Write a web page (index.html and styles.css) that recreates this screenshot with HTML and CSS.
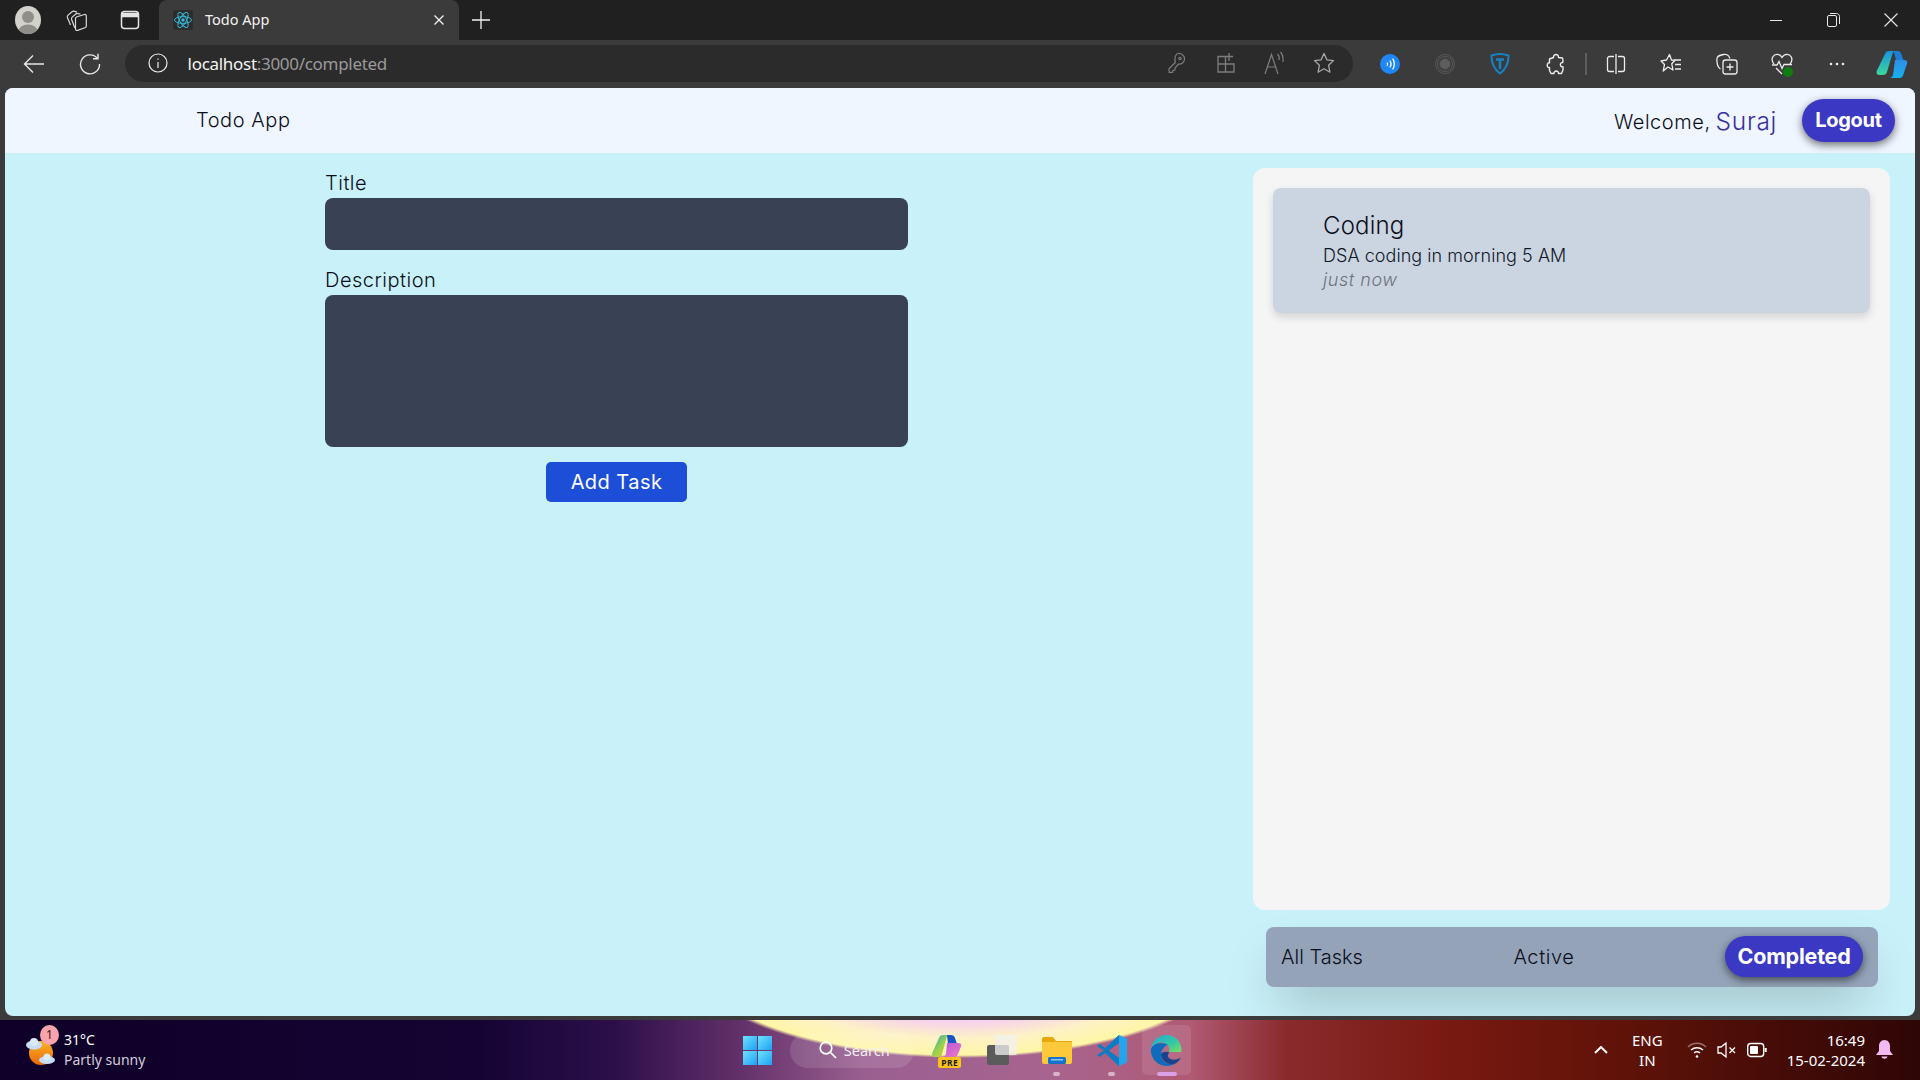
FILE: index.html
```html
<!DOCTYPE html>
<html lang="en">
<head>
<meta charset="utf-8">
<title>Todo App</title>
<link rel="stylesheet" href="styles.css">
</head>
<body>
<div class="browser">
  <div class="tabstrip">
    <div class="strip-btn avatar-btn">
      <svg width="26" height="28" viewBox="0 0 26 28"><defs><clipPath id="av"><ellipse cx="13" cy="14" rx="13" ry="14"/></clipPath></defs><ellipse cx="13" cy="14" rx="13" ry="14" fill="#d2d1cc"/><g clip-path="url(#av)"><circle cx="13" cy="11" r="6" fill="#8f8e89"/><ellipse cx="13" cy="26" rx="10" ry="7.500" fill="#8f8e89"/></g></svg>
    </div>
    <div class="strip-btn coll-btn">
      <svg width="22" height="22" viewBox="0 0 22 22" fill="none" stroke="#d8d8d8" stroke-width="1.200"><path d="M4.500 16 1.400 8.500c-.4-1 0-1.800.7-2.400L6 2.800c.8-.7 1.800-.7 2.800-.4l2.200.7"/><path d="M8.800 19 5.600 10.500c-.4-1-.1-1.800.6-2.400L9.800 5c.8-.7 1.800-.8 2.700-.4l2 .7"/><path d="M9.500 9.500c0-1 .7-1.500 1.500-1.800l7.500-2.200c1-.3 1.800.4 1.800 1.400v10c0 1-.5 1.600-1.400 1.900l-7.300 2.600c-1 .3-2.100-.3-2.100-1.400z"/></svg>
    </div>
    <div class="strip-btn vert-btn">
      <svg width="20" height="20" viewBox="0 0 20 20" fill="none" stroke="#e4e4e4" stroke-width="1.500"><rect x="1.500" y="1.500" width="17" height="17" rx="3"/><path d="M2 5h16" stroke-width="4.500"/></svg>
    </div>
    <div class="tab">
      <span class="favicon">
        <svg width="20" height="20" viewBox="0 0 20 20" fill="none" stroke="#38b6d8" stroke-width="1"><ellipse cx="10" cy="10" rx="8.500" ry="3.400"/><ellipse cx="10" cy="10" rx="8.500" ry="3.400" transform="rotate(60 10 10)"/><ellipse cx="10" cy="10" rx="8.500" ry="3.400" transform="rotate(120 10 10)"/><circle cx="10" cy="10" r="1.700" fill="#38b6d8" stroke="none"/></svg>
      </span>
      <span class="tab-title">Todo App</span>
      <svg class="tab-close" width="12" height="12" viewBox="0 0 12 12" stroke="#f2f2f2" stroke-width="1.300"><path d="M1.500 1.500l9 9M10.500 1.500l-9 9"/></svg>
    </div>
    <div class="strip-btn new-tab">
      <svg width="18" height="18" viewBox="0 0 18 18" stroke="#f2f2f2" stroke-width="1.300"><path d="M9 0v18M0 9h18"/></svg>
    </div>
    <div class="win-controls">
      <span class="win-btn"><svg width="12" height="12" viewBox="0 0 12 12" stroke="#e8e8e8"><path d="M0 6.500h12"/></svg></span>
      <span class="win-btn"><svg width="13" height="14" viewBox="0 0 13 14" fill="none" stroke="#e8e8e8"><rect x=".5" y="2.500" width="9" height="11" rx="1.500"/><path d="M3 .5h6.500c1.500 0 3 1 3 3V11"/></svg></span>
      <span class="win-btn"><svg width="14" height="14" viewBox="0 0 14 14" stroke="#e8e8e8" stroke-width="1.100"><path d="M.5.500l13 13M13.500.5l-13 13"/></svg></span>
    </div>
  </div>

  <div class="toolbar">
    <div class="nav-btn"><svg width="22" height="20" viewBox="0 0 22 20" fill="none" stroke="#e8e8e8" stroke-width="1.400"><path d="M21 10H1.500M10 1.500 1.500 10l8.500 8.500"/></svg></div>
    <div class="nav-btn"><svg width="22" height="22" viewBox="0 0 22 22" fill="none" stroke="#e8e8e8" stroke-width="1.400"><path d="M18.500 5.500A9.500 9.500 0 1 0 20.500 11"/><path d="M19 .8v5h-5"/></svg></div>
    <div class="addressbar">
      <svg class="addr-info" width="20" height="20" viewBox="0 0 20 20" fill="none" stroke="#ececec" stroke-width="1.200"><circle cx="10" cy="10" r="9"/><path d="M10 9v6M10 5.400v1.400"/></svg>
      <span class="url"><span class="url-host">localhost</span>:3000/completed</span>
      <span class="addr-btn"><svg width="20" height="22" viewBox="0 0 20 22" fill="none" stroke="#7d7d7d" stroke-width="1.200"><path d="M11 1.500c3.500-.5 7 2.500 6.500 6-.4 2.800-3 4.800-5.800 4.500L8 16v2l-2 .3-.5 2H2.200l-.2-3.500 6.300-6.300c-1.200-4 .2-8.500 2.700-9z"/><circle cx="13" cy="6.500" r="1.200"/></svg></span>
      <span class="addr-btn"><svg width="20" height="22" viewBox="0 0 20 22" fill="none" stroke="#7d7d7d" stroke-width="1.300"><path d="M2 4.500h7.500V20H2zM2 12h16v8H9.500M13 1v8M9.500 4.500H17"/></svg></span>
      <span class="addr-btn"><svg width="22" height="24" viewBox="0 0 22 24" fill="none" stroke="#7d7d7d" stroke-width="1.200"><path d="M1 23 7.500 3.500 14 23M3.500 16h8M13.500 3c1.500 1.500 2 3.500 1.500 6M16.500 1c2.500 2.500 3 6 2.300 10"/></svg></span>
      <span class="addr-btn"><svg width="22" height="22" viewBox="0 0 22 22" fill="none" stroke="#a8a8a8" stroke-width="1.300" stroke-linejoin="round"><path d="M11 1.500l2.900 6.300 6.600.8-4.900 4.700 1.300 6.900L11 16.800l-5.900 3.400 1.300-6.900L1.500 8.600l6.600-.8z"/></svg></span>
    </div>
    <div class="tool-btn"><svg width="20" height="20" viewBox="0 0 20 20"><circle cx="10" cy="10" r="10" fill="#1f87f5"/><path d="M7 8.500c.8 1 .8 2.300 0 3.300M9.800 6.600c1.500 2 1.500 4.800 0 6.800M12.600 4.700c2.300 3 2.300 7.600 0 10.600" fill="none" stroke="#fff" stroke-width="1.300"/></svg></div>
    <div class="tool-btn"><svg width="20" height="20" viewBox="0 0 20 20" fill="none" stroke="#5a5a5a"><circle cx="10" cy="10" r="9.500"/><circle cx="10" cy="10" r="7.500"/><circle cx="10" cy="10" r="5" fill="#5e5e5e"/></svg></div>
    <div class="tool-btn"><svg width="20" height="22" viewBox="0 0 20 22" fill="none" stroke="#1583c5" stroke-width="2"><path d="M1.500 2.500c5-1.700 12-1.700 17 0 .2 7-2.500 13.500-8.500 18-6-4.500-8.700-11-8.500-18z"/><path d="M6 6.500h8M10 6.500V16" stroke-width="2.500"/></svg></div>
    <div class="tool-btn"><svg width="20" height="22" viewBox="0 0 20 22" fill="none" stroke="#ececec" stroke-width="1.400" stroke-linejoin="round"><path d="M7.500 4.500C7 .5 13 .5 12.500 4.500l4 .5c.6 1 .5 3 .3 4.500-3.500-.3-3 5 .2 4.300v3.200l-1.500 3.500h-3c.5-3.300-5-3.300-4.500 0H5l-1.500-3v-3C.5 15.500.5 9 3.500 9.800V6z"/></svg></div>
    <span class="tool-sep"></span>
    <div class="tool-btn"><svg width="20" height="20" viewBox="0 0 20 20" fill="none" stroke="#ececec" stroke-width="1.300"><path d="M8 2.500H3.500a2 2 0 0 0-2 2v11a2 2 0 0 0 2 2H8M12 2.500h4.500a2 2 0 0 1 2 2v11a2 2 0 0 1-2 2H12M10 0v20"/></svg></div>
    <div class="tool-btn"><svg width="22" height="22" viewBox="0 0 22 22" fill="none" stroke="#ececec" stroke-width="1.300" stroke-linejoin="round"><path d="M9.500 1.500l2 5.500 3.500.3-3.200 3.500 1.200 6.200-5-3-4.800 4 1.300-6.500L1 8l5.500-1z"/><path d="M14 7h7M15 11.500h6M15 16h6"/></svg></div>
    <div class="tool-btn"><svg width="22" height="24" viewBox="0 0 22 24" fill="none" stroke="#ececec" stroke-width="1.300"><path d="M4.500 17C2 15.500 1.300 13 1 10c-.2-2-.2-4 .5-5 1-1.200 3-2 6-2.500 2-.3 4 0 5 1.300L14 6.500"/><rect x="7" y="8" width="14" height="14" rx="2.500"/><path d="M14 11.500v7M10.500 15h7"/></svg></div>
    <div class="tool-btn pulse">
      <svg width="22" height="22" viewBox="0 0 22 22" fill="none" stroke="#ececec" stroke-width="1.300"><path d="M3 11C1 8.500.7 6 1.700 4c2-3.500 7-3.500 9.300.5 2.300-4 7.300-4 9.300-.5 1 2 .7 4.500-1.300 7"/><path d="M1 12h5l2-3.500 3 7 2-4h8M5 15l6 6"/></svg>
      <span class="pulse-dot"></span>
    </div>
    <div class="tool-btn"><svg width="16" height="4" viewBox="0 0 16 4" fill="#ececec"><circle cx="2" cy="2" r="1.300"/><circle cx="8" cy="2" r="1.300"/><circle cx="14" cy="2" r="1.300"/></svg></div>
    <div class="tool-btn"><svg width="32" height="27" viewBox="0 0 32 27"><defs><linearGradient id="cpa" x1="0" y1="0" x2="0" y2="1"><stop offset="0" stop-color="#1a93e0"/><stop offset="1" stop-color="#3bd79c"/></linearGradient><linearGradient id="cpb" x1="0" y1="0" x2="0" y2="1"><stop offset="0" stop-color="#2d8fe6"/><stop offset="1" stop-color="#17b0f0"/></linearGradient></defs><path d="M9 3c.8-2 2-3 4-3h7c-2 0-3 1-3.600 3L11 21c-.6 2-2 3-4 3H3.500C1 24 0 22 .7 20z" fill="url(#cpa)"/><path d="M17.500 0h4c2 0 3.200 1 3.800 3L30 16h-8z" fill="#1b7fd8"/><path d="M19 9h9c2 0 3.800 1 3.200 3l-4 12c-.6 2-2 3-4 3H13c2 0 3.300-1 4-3z" fill="url(#cpb)"/></svg></div>
  </div>

  <div class="page">
    <header class="app-header">
      <span class="brand">Todo App</span>
      <div class="user-area">
        <span class="welcome">Welcome,</span>
        <span class="username">Suraj</span>
        <button class="pill-btn logout">Logout</button>
      </div>
    </header>
    <main class="app-main">
      <form class="task-form">
        <label class="field-label">Title</label>
        <div class="text-input"></div>
        <label class="field-label desc-label">Description</label>
        <div class="text-area"></div>
        <button class="add-btn" type="button">Add Task</button>
      </form>
      <section class="task-side">
        <div class="task-panel">
          <article class="task-card">
            <h3 class="task-title">Coding</h3>
            <p class="task-desc">DSA coding in morning 5 AM</p>
            <p class="task-time">just now</p>
          </article>
        </div>
        <nav class="filter-bar">
          <span class="filter">All Tasks</span>
          <span class="filter filter-active">Active</span>
          <button class="pill-btn completed">Completed</button>
        </nav>
      </section>
    </main>
  </div>

  <footer class="taskbar">
    <div class="tb-left">
      <div class="weather-icon">
        <svg width="30" height="36" viewBox="0 0 30 36"><defs><linearGradient id="sun" x1="0" y1="0" x2="0" y2="1"><stop offset="0" stop-color="#fcb422"/><stop offset="1" stop-color="#e8660e"/></linearGradient></defs><circle cx="16" cy="21" r="12" fill="url(#sun)"/><ellipse cx="9" cy="13" rx="8" ry="4.500" fill="#c6dcf7"/><circle cx="9" cy="10" r="4" fill="#dcebfb"/><ellipse cx="22" cy="28" rx="8" ry="4" fill="#c6dcf7"/><circle cx="22" cy="25" r="3.500" fill="#dcebfb"/></svg>
        <span class="weather-badge">1</span>
      </div>
      <div class="weather-text">
        <span class="temp">31°C</span>
        <span class="cond">Partly sunny</span>
      </div>
    </div>
    <div class="tb-center">
      <div class="win-logo"><i></i><i></i><i></i><i></i></div>
      <div class="tb-search">
        <svg width="18" height="18" viewBox="0 0 18 18" fill="none" stroke="#fff" stroke-width="1.700"><circle cx="7" cy="7" r="5.800"/><path d="M11.500 11.500l5.500 5.500"/></svg>
        <span>Search</span>
      </div>
      <div class="tb-app copilot-app">
        <svg width="30" height="24" viewBox="0 0 30 24"><defs><linearGradient id="cg" x1="0" y1="0" x2="1" y2="1"><stop offset="0" stop-color="#19a0e0"/><stop offset=".5" stop-color="#9ad34a"/><stop offset="1" stop-color="#f0c030"/></linearGradient><linearGradient id="cp" x1="0" y1="0" x2="1" y2="1"><stop offset="0" stop-color="#b555e0"/><stop offset="1" stop-color="#f07ac0"/></linearGradient></defs><path d="M7 3c.6-2 2-3 4-3h7c-2 0-3 1-3.500 3L10 19c-.6 2-2 3-4 3H2.500C.5 22-.4 20 .2 18z" fill="url(#cg)"/><path d="M15 0h4c2 0 3.500 1 4 3l2 6h-9z" fill="#1a55c8"/><path d="M15 8h11c2 0 3.800 1 3.200 3L26 19c-.6 2-2 3-4 3H10c2 0 3.200-1 4-3z" fill="url(#cp)"/></svg>
        <span class="pre-badge">PRE</span>
      </div>
      <div class="tb-app">
        <div class="gray-stack"><span class="gs-back"></span><span class="gs-front"></span></div>
      </div>
      <div class="tb-app">
        <svg width="30" height="27" viewBox="0 0 30 27"><path d="M0 2a2 2 0 0 1 2-2h9l3 4h16v6H0z" fill="#e8a90f"/><path d="M0 5h30v20a2 2 0 0 1-2 2H2a2 2 0 0 1-2-2z" fill="#fdc93a"/><rect x="6" y="20" width="18" height="7" rx="1.500" fill="#1673c8"/><rect x="9" y="22" width="12" height="1.500" fill="#8cc6f2"/></svg>
        <span class="app-dot"></span>
      </div>
      <div class="tb-app">
        <svg width="30" height="31" viewBox="0 0 30 31"><path d="M22 0 30 3.500v24L22 31 7 16z" fill="#25a4ec"/><path d="M22 0 8 13 3 9 0 11l7 4.500L0 20l3 2 5-4 14 13z" fill="#0d7cc5"/><path d="M22 8v15l-10-7.500z" fill="#b8607e"/></svg>
        <span class="app-dot"></span>
      </div>
      <div class="tb-app tb-active">
        <svg width="31" height="31" viewBox="0 0 31 31"><defs><linearGradient id="eg" x1="0" y1="0" x2="1" y2="1"><stop offset="0" stop-color="#22a8d8"/><stop offset=".6" stop-color="#38c8a0"/><stop offset="1" stop-color="#7be060"/></linearGradient></defs><path d="M15.500 0C7 0 .5 6.500 0 14c3-6 10-8 15-5 4 2.500 4 6 3 8h12c1.500-2-.2-17-14.500-17z" fill="url(#eg)"/><path d="M0 14c-.8 10 7 17 16 17 3 0 6-1 8-2.500-7 2-14-2-14-9 0-4 3-8 7-10C10 7 2 8 0 14z" fill="#0f6cbd"/><path d="M10 19c0 7 8 12 14.500 9.500 2-1 4-3 5.500-6-4 3-12 3-13-1-.5-1.500.5-3 1.500-4-4.500-2-8 0-8.500 1.500z" fill="#17448c"/></svg>
        <span class="app-dot active-dot"></span>
      </div>
    </div>
    <div class="tb-right">
      <svg class="tray-caret" width="14" height="8" viewBox="0 0 14 8" fill="none" stroke="#fff" stroke-width="2"><path d="M1 7l6-6 6 6"/></svg>
      <div class="tray-lang"><span>ENG</span><span>IN</span></div>
      <svg class="tray-ic" width="20" height="18" viewBox="0 0 20 18" fill="none" stroke="#fff" stroke-width="1.500"><path d="M1 6c5-5 13-5 18 0" stroke-opacity=".4"/><path d="M4 9c3.500-3 8.500-3 12 0M7 12c1.800-1.500 4.200-1.500 6 0"/><circle cx="10" cy="15.500" r="1.300" fill="#fff" stroke="none"/></svg>
      <svg class="tray-ic" width="20" height="18" viewBox="0 0 20 18" fill="none" stroke="#fff" stroke-width="1.300"><path d="M1 6v6h3l5 4V2L4 6zM12.500 6.500l5.500 5.500M18 6.500 12.500 12"/></svg>
      <svg class="tray-ic" width="20" height="16" viewBox="0 0 20 16" fill="none" stroke="#fff" stroke-width="1.400"><rect x=".7" y="1.500" width="16" height="13" rx="3"/><rect x="3" y="4" width="8" height="8" rx="1" fill="#fff" stroke="none"/><path d="M18.700 6v4" stroke-width="2"/></svg>
      <div class="tray-clock"><span>16:49</span><span>15-02-2024</span></div>
      <svg class="tray-bell" width="17" height="20" viewBox="0 0 17 20" fill="#f2b9f2"><path d="M8.500 0C5 0 3 3 3 6v5l-3 4h17l-3-4V6c0-3-2-6-5.500-6z"/><path d="M5.500 16.500h6c-.5 3-5.500 3-6 0z"/></svg>
    </div>
  </footer>
</div>
</body>
</html>
```

FILE: styles.css
```css
* { box-sizing: border-box; }
html, body { margin: 0; padding: 0; height: 100%; overflow: hidden; }
body { background: #3b3b3b; font-family: "Inter", "Liberation Sans", sans-serif; color: #0b0f1a; }
svg { display: block; flex: none; }

.browser { display: flex; flex-direction: column; height: 1080px; width: 1920px; }

/* Tab strip */
.tabstrip { display: flex; align-items: flex-end; height: 40px; background: #202020; padding-left: 8px; flex: none; }
.strip-btn { height: 40px; display: flex; align-items: center; justify-content: center; }
.avatar-btn { width: 40px; }
.coll-btn { width: 58px; }
.vert-btn { width: 48px; }
.tab { margin-left: 5px; width: 300px; height: 40px; background: #3b3b3b; border-radius: 8px 8px 0 0; display: flex; align-items: center; padding: 0 14px; }
.favicon { width: 20px; height: 20px; background: #2c2c2c; border-radius: 2px; margin-right: 12px; }
.tab-title { flex: 1; font: 14.500px "Noto Sans", sans-serif; color: #f2f2f2; margin-top: -2px; }
.new-tab { width: 44px; }
.win-controls { margin-left: auto; display: flex; height: 40px; }
.win-btn { width: 57.500px; display: flex; align-items: center; justify-content: center; }

/* Toolbar */
.toolbar { display: flex; align-items: center; height: 48px; background: #3b3b3b; padding-left: 6px; flex: none; }
.nav-btn { width: 56px; height: 48px; display: flex; align-items: center; justify-content: center; }
.addressbar { margin-left: 7px; width: 1233px; height: 37px; border-radius: 19px; background: #2b2b2b; display: flex; align-items: center; padding: 0 5px 0 23px; margin-top: -2px; }
.url { flex: 1; margin-left: 20px; font: 17px "Noto Sans", sans-serif; letter-spacing: -.3px; color: #9a9a9a; }
.url-host { color: #f4f4f4; }
.addr-btn { width: 49px; display: flex; align-items: center; justify-content: center; }
.tool-btn { width: 55.500px; height: 48px; display: flex; align-items: center; justify-content: center; position: relative; }
.addressbar + .tool-btn { margin-left: 9px; }
.tool-sep { width: 2px; height: 22px; background: #5c5c5c; margin: 0 1px 0 2px; }
.pulse-dot { position: absolute; width: 10px; height: 10px; border-radius: 50%; background: #107c10; left: 29px; top: 27px; }

/* Page */
.page { flex: 1; margin: 0 5px; background: #c9f1f9; border-radius: 8px; overflow: hidden; display: flex; flex-direction: column; min-height: 0; }
.app-header { height: 65px; background: #eff6ff; display: flex; align-items: center; justify-content: space-between; padding: 0 20px 0 191px; flex: none; }
.brand { font-size: 20px; font-weight: 350; letter-spacing: .55px; color: #0b0f1a; margin-top: -2px; }
.user-area { display: flex; align-items: center; }
.welcome { font-size: 20px; font-weight: 350; letter-spacing: .55px; margin-top: 3px; }
.username { font-size: 24.500px; font-weight: 350; letter-spacing: .7px; color: #3730a3; margin-left: 5px; margin-right: 25px; }
.pill-btn { border: 0; background: #3b38c4; color: #fff; font-family: "Inter", "Liberation Sans", sans-serif; font-weight: 700; font-size: 20px; border-radius: 22px; box-shadow: 0 3px 8px rgba(0,0,0,.55); padding: 0; }
.logout { width: 93px; height: 43px; letter-spacing: -.3px; margin-top: -1px; }

.app-main { flex: 1; display: grid; grid-template-columns: 1fr 637px; padding: 15px 25px 0 320px; min-height: 0; }

.task-form { display: flex; flex-direction: column; width: 583px; }
.field-label { font-size: 20px; font-weight: 350; letter-spacing: .5px; line-height: 30px; color: #0b0f1a; }
.text-input { height: 52px; background: #394254; border-radius: 8px; }
.desc-label { margin-top: 15px; }
.text-area { height: 152px; background: #394254; border-radius: 8px; }
.add-btn { align-self: center; margin-top: 15px; width: 141px; height: 40px; border: 0; border-radius: 5px; background: #1d4ed8; color: #fff; font-family: "Inter", "Liberation Sans", sans-serif; font-size: 20px; letter-spacing: .45px; }

.task-side { display: flex; flex-direction: column; min-height: 0; }
.task-panel { height: 742px; background: #f5f5f5; border-radius: 12px; padding: 20px; }
.task-card { height: 125px; background: #cbd5e1; border-radius: 8px; box-shadow: 0 4px 8px rgba(0,0,0,.14); padding: 22px 50px 0; }
.task-title { margin: 0; font-size: 24px; font-weight: 350; letter-spacing: .2px; line-height: 31px; color: #0b0f1a; }
.task-desc { margin: 0; font-size: 18px; font-weight: 350; letter-spacing: .05px; line-height: 29px; color: #111827; }
.task-time { margin: 0; font-size: 18px; line-height: 20px; font-style: italic; color: #6b7280; font-weight: 300; letter-spacing: .55px; }

.filter-bar { margin: 17px 12px 0 13px; height: 60px; background: #94a3b8; border-radius: 8px; display: flex; align-items: center; justify-content: space-between; padding: 0 15px 0 15px; box-shadow: 0 25px 50px -12px rgba(0,0,0,.25); flex: none; }
.filter { font-size: 20px; font-weight: 350; color: #0b0f1a; }
.filter-active { letter-spacing: .6px; }
.completed { width: 138px; height: 41px; font-size: 21.500px; letter-spacing: -.2px; margin-top: -2px; }

/* Taskbar */
.taskbar { flex: none; margin-top: 4px; height: 60px; display: grid; grid-template-columns: 1fr auto 1fr; align-items: center; font-family: "Noto Sans", sans-serif; color: #fff;
  background:
    radial-gradient(ellipse 272px 98px at 50% -60px, #f4c4f6 0, #f6d0ee 62%, #fdf2c6 80%, #fff6a6 97%, rgba(255,246,166,0) 100%),
    linear-gradient(90deg, #0e0028 0, #150433 25%, #2c0f4a 32%, #5e2d66 38%, #9a5f90 45%, #a8648e 55%, #b05a74 62%, #8a2a2c 67%, #7a1a12 75%, #5e1208 85%, #2e0606 100%);
}
.tb-left { display: flex; align-items: center; padding-left: 25px; }
.weather-icon { position: relative; width: 30px; height: 36px; }
.weather-badge { position: absolute; left: 15px; top: -7px; width: 19px; height: 20px; border-radius: 50%; background: #f9a3ad; color: #3a1020; font-size: 12px; line-height: 20px; text-align: center; }
.weather-text { display: flex; flex-direction: column; margin-left: 9px; font-size: 14px; line-height: 20px; }
.cond { color: #d4cbd8; }

.tb-center { display: flex; align-items: center; height: 60px; margin-left: 14px; }
.win-logo { width: 29px; height: 29px; display: grid; grid-template-columns: 1fr 1fr; gap: 1px; margin-right: 18px; }
.win-logo i { background: linear-gradient(135deg, #6fe2fb, #1ea0f5); }
.tb-search { width: 124px; height: 35px; border-radius: 18px; background: rgba(255,255,255,.12); display: flex; align-items: center; padding-left: 29px; gap: 7px; font-size: 14.500px; color: #f4f0f4; margin-right: 5.500px; }
.tb-app { position: relative; width: 55px; height: 50px; display: flex; align-items: center; justify-content: center; }
.copilot-app svg { margin-top: -7px; }
.pre-badge { position: absolute; left: 19px; top: 32px; width: 23px; height: 11px; border-radius: 2px; background: #fcc419; color: #1a1a1a; font-size: 8.500px; line-height: 11px; font-weight: 700; text-align: center; letter-spacing: .5px; }
.gray-stack { position: relative; width: 30px; height: 30px; }
.gs-back { position: absolute; left: 0; bottom: 0; width: 22px; height: 20px; background: #5b5b5b; border-radius: 2px; }
.gs-front { position: absolute; right: 0; top: 0; width: 22px; height: 20px; background: rgba(240,240,240,.75); border-radius: 2px; }
.app-dot { position: absolute; left: 24px; bottom: -1px; width: 7px; height: 4px; border-radius: 2px; background: #d8b4c8; }
.tb-active { width: 49px; margin-left: 3px; background: rgba(255,255,255,.1); border-radius: 5px; }
.active-dot { left: 15px; width: 20px; background: #dba0e6; }

.tb-right { display: flex; align-items: center; justify-content: flex-end; font-size: 15px; line-height: 20px; }
.tray-caret { margin-right: 24px; }
.tray-lang { display: flex; flex-direction: column; align-items: center; margin-right: 24px; }
.tray-ic { margin-right: 10px; }
.tray-clock { display: flex; flex-direction: column; align-items: flex-end; margin-left: 10px; }
.tray-bell { margin: 0 27px 0 11px; }
```
